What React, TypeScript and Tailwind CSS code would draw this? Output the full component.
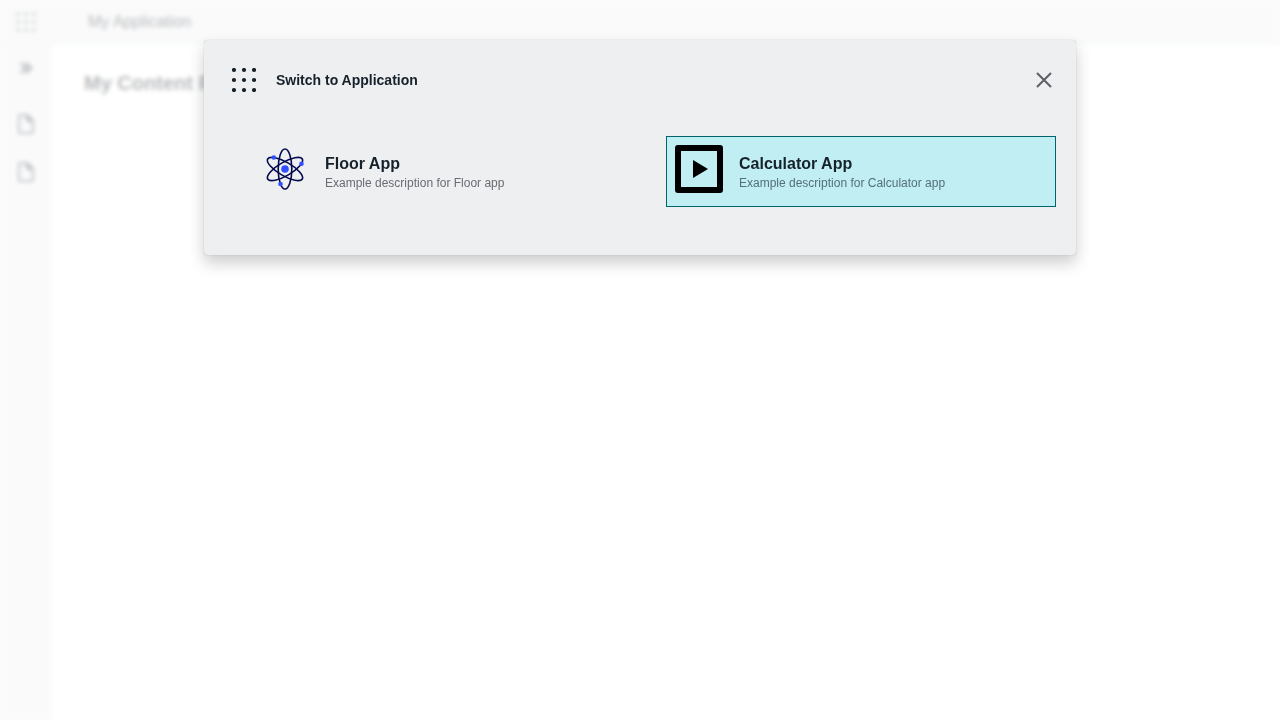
import type { ReactNode } from "react";

function DotGrid({ className }: { className: string }) {
  return (
    <svg viewBox="0 0 24 24" className={className} fill="currentColor" aria-hidden="true">
      {[2, 12, 22].map((y) => [2, 12, 22].map((x) => <circle key={`${x}-${y}`} cx={x} cy={y} r="2.1" />))}
    </svg>
  );
}

function TileGrid({ className }: { className: string }) {
  return (
    <svg viewBox="0 0 20 20" className={className} fill="currentColor" aria-hidden="true">
      {[0, 8, 16].map((y) => [0, 8, 16].map((x) => <rect key={`${x}-${y}`} x={x} y={y} width="4" height="4" />))}
    </svg>
  );
}

function PageIcon() {
  return (
    <svg viewBox="0 0 24 24" className="size-6" fill="currentColor" aria-hidden="true">
      <path d="M14 2H6c-1.1 0-2 .9-2 2v16c0 1.1.9 2 2 2h12c1.1 0 2-.9 2-2V8l-6-6zM6 20V4h7v5h5v11H6z" />
      <path d="M12 4l6 6-3 1-4-4z" />
    </svg>
  );
}

function AtomIcon() {
  return (
    <svg viewBox="0 0 48 48" className="size-12 shrink-0" fill="none" aria-hidden="true">
      <g stroke="#050a4e" strokeWidth="1.6">
        <ellipse cx="24" cy="24" rx="6.8" ry="20" />
        <ellipse cx="24" cy="24" rx="6.8" ry="20" transform="rotate(60 24 24)" />
        <ellipse cx="24" cy="24" rx="6.8" ry="20" transform="rotate(120 24 24)" />
      </g>
      <g fill="#304ffe">
        <circle cx="24" cy="24" r="3.8" />
        <circle cx="12.8" cy="12.5" r="2.3" />
        <circle cx="40.5" cy="18.8" r="2.3" />
        <circle cx="19.5" cy="39" r="2.3" />
      </g>
    </svg>
  );
}

function PlayIcon() {
  return (
    <svg viewBox="0 0 48 48" className="size-12 shrink-0" aria-hidden="true">
      <path
        fillRule="evenodd"
        d="M3 0h42a3 3 0 0 1 3 3v42a3 3 0 0 1-3 3H3a3 3 0 0 1-3-3V3a3 3 0 0 1 3-3zM6 6v36h36V6z"
      />
      <path d="M18 15v18l15-9z" />
    </svg>
  );
}

type AppCardProps = { name: string; description: string; icon: ReactNode; selected?: boolean };

function AppCard({ name, description, icon, selected }: AppCardProps) {
  return (
    <a
      href="#"
      aria-current={selected ? "true" : undefined}
      className={`flex h-[71px] items-start gap-4 border p-2 ${
        selected ? "border-[#00656b] bg-[#c0eef2]" : "border-transparent"
      }`}
    >
      {icon}
      <span className="flex flex-col pt-2">
        <span className="text-base leading-[22px] font-bold text-[#15212b]">{name}</span>
        <span className={`text-xs leading-4 ${selected ? "text-[#556f78]" : "text-[#686c73]"}`}>
          {description}
        </span>
      </span>
    </a>
  );
}

export default function App() {
  return (
    <div className="relative min-h-screen overflow-hidden bg-white font-['Liberation_Sans',Arial,sans-serif]">
      <div className="flex min-h-screen flex-col text-[#15212b]" inert>
        <header className="flex h-[45px] items-center border-b border-[#e4e9e8] bg-[#eeeff1] px-4">
          <button type="button" aria-label="Switch application" className="text-[#8f9d99]">
            <TileGrid className="size-5" />
          </button>
          <span className="pl-[52px] text-base">My Application</span>
        </header>
        <div className="flex flex-1">
          <nav className="flex w-[52px] flex-col items-center bg-[#eeeff1] pt-[11px] text-[#3a444d]">
            <button type="button" aria-label="Expand menu">
              <svg viewBox="0 0 24 24" className="size-6" fill="none" stroke="currentColor" strokeWidth="3" aria-hidden="true">
                <path d="M7 7l5 5-5 5M12 7l5 5-5 5" />
              </svg>
            </button>
            <a href="#" aria-label="Page one" className="mt-8">
              <PageIcon />
            </a>
            <a href="#" aria-label="Page two" className="mt-6">
              <PageIcon />
            </a>
          </nav>
          <main className="px-8 pt-[23px]">
            <h1 className="text-xl leading-[30px] font-bold">My Content Page</h1>
          </main>
        </div>
      </div>

      <div className="absolute inset-0 bg-white/70 px-6 pt-10 backdrop-blur-[2px]">
        <section
          role="dialog"
          aria-modal="true"
          aria-labelledby="switcher-title"
          className="mx-auto w-full max-w-[872px] rounded-[4px] bg-[#eeeff1] pr-5 pb-12 pl-7 shadow-[0_0_1px_rgba(0,0,0,0.32),0_8px_16px_rgba(0,0,0,0.2)]"
        >
          <div className="flex h-20 items-center">
            <DotGrid className="size-6 text-[#15212b]" />
            <h2 id="switcher-title" className="pl-5 text-sm font-bold text-[#15212b]">
              Switch to Application
            </h2>
            <button type="button" aria-label="Close" className="ml-auto text-[#5b6067]">
              <svg viewBox="0 0 24 24" className="size-6" fill="none" stroke="currentColor" strokeWidth="2" aria-hidden="true">
                <path d="M5 5l14 14M19 5L5 19" />
              </svg>
            </button>
          </div>
          <div className="grid grid-cols-2 gap-6 pt-4 pl-5">
            <AppCard name="Floor App" description="Example description for Floor app" icon={<AtomIcon />} />
            <AppCard
              name="Calculator App"
              description="Example description for Calculator app"
              icon={<PlayIcon />}
              selected
            />
          </div>
        </section>
      </div>
    </div>
  );
}
